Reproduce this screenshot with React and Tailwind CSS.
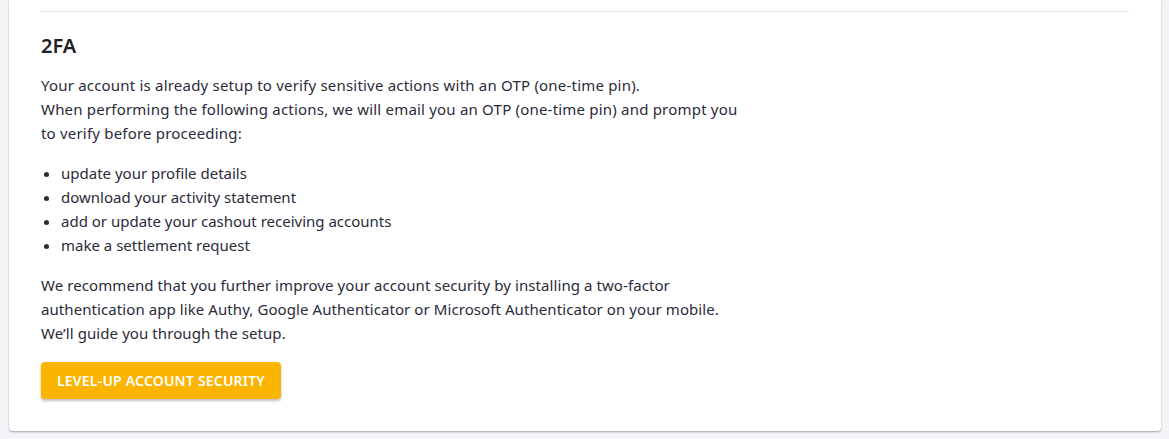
import React from 'react';

const actions = [
  'update your profile details',
  'download your activity statement',
  'add or update your cashout receiving accounts',
  'make a settlement request',
];

const App = () => {
  return (
    <div className="min-h-screen bg-[#f3f4f8] px-[8px] pb-[8px] pl-[9px] font-['Noto_Sans',sans-serif] text-[#2b2b3b]">
      <div className="bg-white rounded-b-[4px] shadow-[0_1px_2px_rgba(0,0,0,0.35)] px-8 pt-[11px] pb-[32px]">
        <div className="border-t border-[#e2e2e2]" />

        <h2 className="mt-[20px] text-[20px] leading-[28px] font-semibold text-[#222]">2FA</h2>

        <p className="mt-[13px] text-[15px] leading-[24px] tracking-[0.2px]">
          Your account is already setup to verify sensitive actions with an OTP (one-time pin).
          <br />
          When performing the following actions, we will email you an OTP (one-time pin) and prompt you
          <br />
          to verify before proceeding:
        </p>

        <ul className="mt-[16px] list-disc pl-[20px] text-[15px] leading-[24px]">
          {actions.map((a) => (
            <li key={a}>{a}</li>
          ))}
        </ul>

        <p className="mt-[16px] text-[15px] leading-[24px] tracking-[0.08px]">
          We recommend that you further improve your account security by installing a two-factor
          <br />
          authentication app like Authy, Google Authenticator or Microsoft Authenticator on your mobile.
          <br />
          We’ll guide you through the setup.
        </p>

        <button className="mt-[17px] h-[37px] w-[240px] rounded-[4px] bg-[#fbb400] text-white text-[14px] font-semibold uppercase tracking-[0.2px] shadow-[0_2px_3px_rgba(0,0,0,0.25)]">
          Level-up account security
        </button>
      </div>
    </div>
  );
};

export default App;
